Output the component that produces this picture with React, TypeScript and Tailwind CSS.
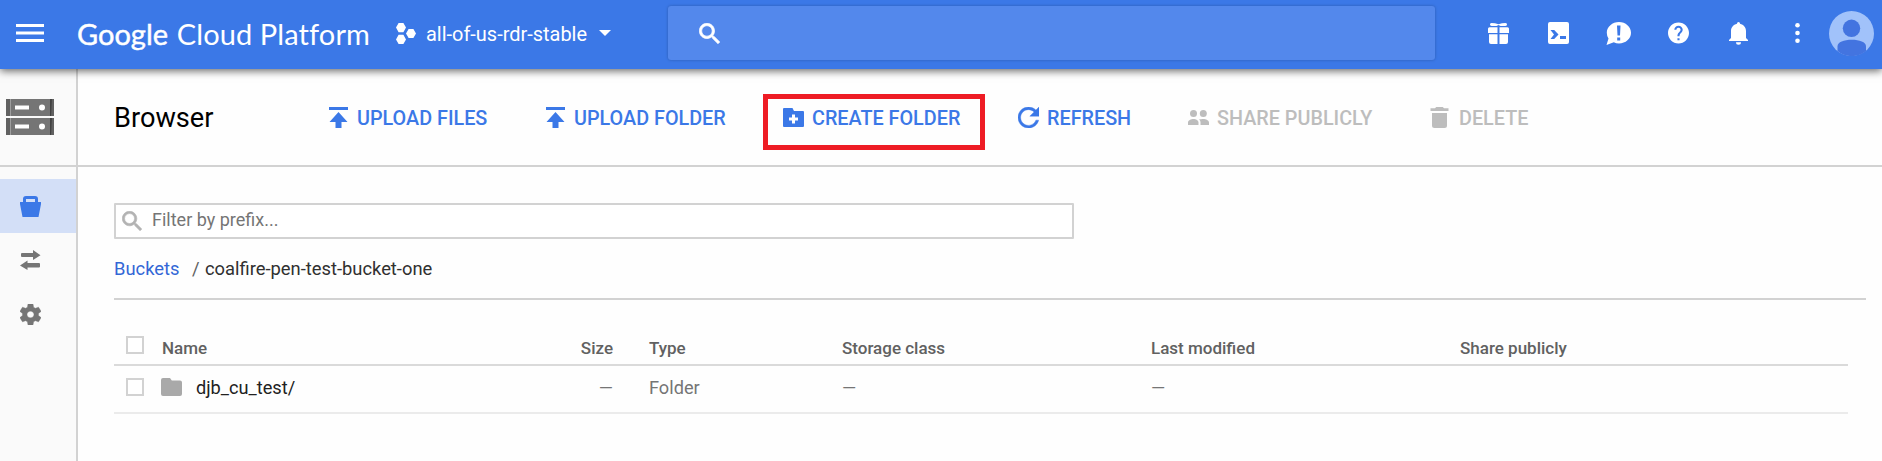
import React from 'react';

type IconProps = { className?: string };

const UploadIcon = () => (
  <svg className="h-[21px] w-[19px] shrink-0" viewBox="0 0 19 21" fill="currentColor">
    <path d="M0 0h19v3H0zM9.5 5l9 10h-6v6h-6v-6h-6z" />
  </svg>
);

const CreateFolderIcon = () => (
  <svg className="h-[19px] w-[21px] shrink-0" viewBox="0 0 21 19" fill="currentColor" fillRule="evenodd">
    <path d="M1 0h8.500l1.500 3h9a1 1 0 0 1 1 1v14a1 1 0 0 1-1 1H1a1 1 0 0 1-1-1V1a1 1 0 0 1 1-1zM9 6.500v3H6v3h3v3h3v-3h3v-3h-3v-3z" />
  </svg>
);

const RefreshIcon = () => (
  <svg className="h-[21px] w-[21px] shrink-0" viewBox="4 4 16 16" fill="currentColor" stroke="currentColor" strokeWidth="0.3">
    <path d="M17.650 6.350C16.200 4.900 14.210 4 12 4c-4.420 0-7.990 3.580-7.990 8s3.570 8 7.990 8c3.730 0 6.840-2.550 7.730-6h-2.080c-.820 2.330-3.040 4-5.650 4-3.310 0-6-2.690-6-6s2.690-6 6-6c1.660 0 3.140.690 4.220 1.780L13 11h7V4l-2.350 2.350z" />
  </svg>
);

const PeopleIcon = () => (
  <svg className="h-[15px] w-[21px] shrink-0" viewBox="0 0 21 15" fill="currentColor">
    <circle cx="5.500" cy="3.500" r="3.500" />
    <circle cx="15.300" cy="3.500" r="3.500" />
    <path d="M0 15v-2.500C0 10.200 3 9 5.500 9s5 1.200 5 3.500V15zM12.500 15v-2.500c0-1.300-.6-2.200-1.500-2.900 1.100-.4 3-.6 4.300-.6 2.700 0 5.700 1.200 5.700 3.500V15z" />
  </svg>
);

const TrashIcon = () => (
  <svg className="h-[21px] w-[19px] shrink-0" viewBox="0 0 19 21" fill="currentColor">
    <path d="M0.500 1.200H5L6.200 0h6.600L14 1.200h4.500V4H.5zM2 6h15v12.500a2.500 2.500 0 0 1-2.500 2.500h-10A2.500 2.500 0 0 1 2 18.500z" />
  </svg>
);

const SearchIcon = ({ className }: IconProps) => (
  <svg className={className} viewBox="2.700 2.700 18 18" fill="currentColor" stroke="currentColor" strokeWidth="0.600">
    <path d="M15.500 14h-.790l-.280-.270C15.410 12.590 16 11.110 16 9.500 16 5.910 13.090 3 9.500 3S3 5.910 3 9.500 5.910 16 9.500 16c1.610 0 3.090-.590 4.230-1.570l.270.280v.790l5 4.990L20.490 19l-4.990-5zm-6 0C7.010 14 5 11.990 5 9.500S7.010 5 9.500 5 14 7.010 14 9.500 11.990 14 9.500 14z" />
  </svg>
);

const ProjectIcon = () => (
  <svg className="ml-[26px] h-[21px] w-5" viewBox="0 0 20 21" fill="currentColor">
    <path d="M2.600 0h4.800L10 4.600 7.400 9.200H2.600L0 4.600zM2.600 11.800h4.800L10 16.400 7.400 21H2.600L0 16.400zM12.600 6h4.800L20 10.500 17.400 15h-4.800L10 10.500z" />
  </svg>
);

const ServerIcon = () => (
  <svg className="h-9 w-12" viewBox="0 0 48 36">
    {[0, 19].map((y) => (
      <g key={y} transform={`translate(0 ${y})`}>
        <path fill="#757575" d="M0 0h48v17H0z" />
        <path fill="#616161" d="M0 0h4v17H0zM45 0h3v17h-3z" />
        <path fill="#9e9e9e" d="M4 0h1v17H4z" />
        <path fill="#424242" d="M44 0h2l-1 17h-1z" />
        <path fill="#fff" d="M9 6.500h14v4H9z" />
        <circle cx="36" cy="8.500" r="3" fill="#fff" />
      </g>
    ))}
  </svg>
);

const BucketIcon = () => (
  <svg className="h-[21px] w-[21px]" viewBox="0 0 21 21" fill="currentColor" fillRule="evenodd">
    <path d="M3 6V3a3 3 0 0 1 3-3h9a3 3 0 0 1 3 3v3h3v2l-2.500 13h-16L0 8V6zM6 3v3h9V3z" />
  </svg>
);

const TransferIcon = () => (
  <svg className="h-[21px] w-[21px]" viewBox="0 0 21 21" fill="currentColor">
    <path d="M1 4Q1 3 2 3h11V0l7.500 5.200L13 10V7H2Q1 7 1 6zM20 14q0-1-1-1H7.500v-2.500L0 15.500 7.500 20v-2.500H19q1 0 1-1z" />
  </svg>
);

const GearIcon = () => (
  <svg className="h-[21px] w-[21px]" viewBox="2.270 2 19.460 20" preserveAspectRatio="none" fill="currentColor" stroke="currentColor" strokeWidth="0.300">
    <path d="M19.430 12.980c.040-.320.070-.640.070-.980s-.030-.660-.070-.980l2.110-1.650c.190-.150.240-.420.120-.640l-2-3.460c-.120-.220-.390-.300-.610-.220l-2.490 1c-.520-.400-1.080-.730-1.690-.980l-.380-2.650C14.460 2.180 14.250 2 14 2h-4c-.250 0-.460.180-.490.420l-.380 2.650c-.610.250-1.170.590-1.690.980l-2.490-1c-.230-.090-.490 0-.610.220l-2 3.460c-.130.220-.070.490.120.640l2.110 1.650c-.040.320-.070.650-.070.980s.030.660.070.980l-2.110 1.650c-.190.150-.240.420-.120.640l2 3.460c.120.220.390.300.610.220l2.490-1c.520.400 1.080.730 1.690.980l.380 2.650c.030.240.240.420.490.420h4c.250 0 .460-.180.490-.420l.380-2.650c.610-.250 1.170-.590 1.690-.980l2.490 1c.230.090.490 0 .610-.220l2-3.460c.120-.220.070-.490-.120-.640l-2.110-1.650zM12 15.200c-1.800 0-3.200-1.400-3.200-3.200s1.400-3.200 3.200-3.200 3.200 1.400 3.200 3.200-1.400 3.200-3.200 3.200z" />
  </svg>
);

const FolderIcon = () => (
  <svg className="-mt-[2px] h-[18px] w-[21px]" viewBox="0 0 21 18" fill="#a9a9a9">
    <path d="M2 0h7l1.800 2.500H19a2 2 0 0 1 2 2V16a2 2 0 0 1-2 2H2a2 2 0 0 1-2-2V2a2 2 0 0 1 2-2z" />
  </svg>
);

const GiftIcon = () => (
  <svg className="h-[21px] w-[21px]" viewBox="0 0 21 21" fill="currentColor">
    <path d="M3.500 0Q7 0 10.500 1.300 14 0 17.500 0 19.300 0 19 1.700 18.700 3 17 3h-4.500L10.500 2 8.500 3H4Q2.300 3 2 1.700 1.700 0 3.500 0zM1.500 4.200h8V10H0V5.700a1.500 1.500 0 0 1 1.500-1.500zM11.500 4.200h8A1.500 1.500 0 0 1 21 5.700V10h-9.500zM1 11.200h8.500V21H3a2 2 0 0 1-2-2zM11.500 11.200H20V19a2 2 0 0 1-2 2h-6.500z" />
  </svg>
);

const ShellIcon = () => (
  <svg className="h-[22px] w-[21px]" viewBox="0 0 21 22" fill="currentColor" fillRule="evenodd">
    <path d="M2 0h17a2 2 0 0 1 2 2v18a2 2 0 0 1-2 2H2a2 2 0 0 1-2-2V2a2 2 0 0 1 2-2zM2.500 8l3.500 4.500L2.500 17h3.700L10.500 12.500 6.200 8zM12 14v3h6v-3z" />
  </svg>
);

const FeedbackIcon = () => (
  <svg className="h-[23px] w-[25px]" viewBox="0 0 25 23" fill="currentColor" fillRule="evenodd">
    <path d="M13 0c6.600 0 12 4.800 12 10.800s-5.400 10.700-12 10.700c-1.900 0-3.600-.4-5.200-1.200L.5 23l2-6.600A9.900 9.900 0 0 1 .8 10.800C.8 4.800 6.400 0 13 0zM11 3.500l.5 10h2.500l.5-10zM11.200 15.500v3h3v-3z" />
  </svg>
);

const HelpIcon = () => (
  <svg className="h-[22px] w-[21px]" viewBox="2 2 20 20" fill="currentColor">
    <path d="M12 2C6.480 2 2 6.480 2 12s4.480 10 10 10 10-4.480 10-10S17.520 2 12 2zm1 17h-2v-2h2v2zm2.070-7.750l-.900.920C13.450 12.900 13 13.500 13 15h-2v-.500c0-1.100.450-2.100 1.170-2.830l1.240-1.260c.370-.360.590-.860.590-1.410 0-1.100-.900-2-2-2s-2 .900-2 2H8c0-2.210 1.790-4 4-4s4 1.790 4 4c0 .880-.360 1.680-.930 2.250z" />
  </svg>
);

const BellIcon = () => (
  <svg className="h-[23px] w-[19px]" viewBox="0 0 19 23" fill="currentColor">
    <path d="M8 1.500a1.500 1.500 0 0 1 3 0v.2C14.800 2.500 17 5.500 17 9v7l2 2v1H0v-1l2-2V9c0-3.500 2.200-6.500 6-7.300zM7 20.300h5a2.500 2.500 0 0 1-5 0z" />
  </svg>
);

const MoreIcon = () => (
  <svg className="h-5 w-[5px]" viewBox="0 0 5 20" fill="currentColor">
    <circle cx="2.500" cy="2.300" r="2.300" />
    <circle cx="2.500" cy="10" r="2.300" />
    <circle cx="2.500" cy="17.700" r="2.300" />
  </svg>
);

const Avatar = () => (
  <svg className="h-[45px] w-[45px]" viewBox="0 0 45 45">
    <circle cx="22.500" cy="22.500" r="22.500" fill="#a1c2fa" />
    <circle cx="22.500" cy="17.300" r="8.700" fill="#4374e0" />
    <path fill="#4374e0" d="M8.500 40v-4.500C8.500 31 15 28.800 22.700 28.800S37 31 37 35.500V40a22.500 22.500 0 0 1-28.500 0z" />
  </svg>
);

const Action = ({ icon, label, className }: { icon: React.ReactNode; label: string; className: string }) => (
  <button className={`flex items-center whitespace-nowrap text-[19.800px] leading-6 font-medium ${className}`}>
    {icon}
    <span className="pt-[3px]">{label}</span>
  </button>
);

const Checkbox = ({ className }: IconProps) => (
  <span className={`block h-[18px] w-[18px] border-2 border-[#d2d2d2] bg-white ${className}`} />
);

const grid = 'grid grid-cols-[48px_450px_37px_193px_309px_309px_388px] items-start';

export default function App() {
  return (
    <div className="flex h-[461px] w-[1882px] flex-col overflow-hidden bg-[#fefefe] font-['Roboto',sans-serif] text-black">
      <header className="relative z-10 flex h-[69px] shrink-0 items-center bg-[#3b78e7] pb-[3px] text-white shadow-[0_2px_8px_rgba(0,0,0,0.6)]">
        <svg className="ml-4 h-[18px] w-7" viewBox="0 0 28 18" fill="currentColor">
          <path d="M0 0h28v3H0zM0 7.500h28v3H0zM0 15h28v3H0z" />
        </svg>
        <div className="ml-[33px] flex w-[293px] items-baseline whitespace-nowrap pt-px font-['Lato',sans-serif] text-[29px] leading-8 [font-variant-ligatures:none]">
          <span className="w-[101px] [-webkit-text-stroke:0.45px_white]">Google</span>
          <span className="tracking-[0.100px]">Cloud Platform</span>
        </div>
        <ProjectIcon />
        <span className="ml-[10px] w-[164px] whitespace-nowrap pt-[2px] text-[19.950px] leading-6">all-of-us-rdr-stable</span>
        <svg className="ml-[9px] h-[6px] w-3" viewBox="0 0 12 6" fill="currentColor">
          <path d="M0 0h12L6 6z" />
        </svg>
        <div className="ml-[57px] flex h-[54px] w-[767px] items-center rounded-[3px] bg-[#5388ec] pl-[31px] shadow-[0_0_3px_rgba(0,0,0,0.25)]">
          <SearchIcon className="h-[21px] w-[21px]" />
        </div>
        <div className="ml-[53px] flex items-center">
          <GiftIcon />
          <span className="ml-[39px]"><ShellIcon /></span>
          <span className="ml-[37px]"><FeedbackIcon /></span>
          <span className="ml-[37px]"><HelpIcon /></span>
          <span className="ml-10"><BellIcon /></span>
          <span className="ml-[47px]"><MoreIcon /></span>
          <span className="ml-[29px]"><Avatar /></span>
        </div>
      </header>

      <div className="flex h-[98px] shrink-0 border-b-2 border-[#d2d2d2]">
        <div className="flex w-[78px] items-start border-r-2 border-[#d2d2d2] bg-[#fafafa] pt-[30px] pl-[6px]">
          <ServerIcon />
        </div>
        <div className="flex h-24 items-center pl-9">
          <h1 className="w-[215px] pt-px text-[27.200px] leading-8">Browser</h1>
          <Action className="w-[217px] gap-[9px] text-[#3b78e7]" icon={<UploadIcon />} label="UPLOAD FILES" />
          <Action className="w-[217px] gap-[9px] text-[#3b78e7]" icon={<UploadIcon />} label="UPLOAD FOLDER" />
          <div className="mt-[10px] flex h-14 w-[222px] items-start border-5 border-[#ee1c24] pt-[5px] pl-[15px]">
            <Action className="gap-2 text-[#3b78e7]" icon={<CreateFolderIcon />} label="CREATE FOLDER" />
          </div>
          <Action className="ml-[33px] w-[170px] gap-2 text-[#3b78e7]" icon={<RefreshIcon />} label="REFRESH" />
          <Action className="w-[242px] gap-2 text-[#bdbdbd]" icon={<PeopleIcon />} label="SHARE PUBLICLY" />
          <Action className="gap-[10px] text-[#bdbdbd]" icon={<TrashIcon />} label="DELETE" />
        </div>
      </div>

      <div className="flex grow">
        <nav className="w-[78px] shrink-0 border-r-2 border-[#d2d2d2] bg-[#fafafa] pt-3 text-[#757575]">
          <div className="flex h-[54px] items-center bg-[#d3dff7] pl-5 text-[#3b78e7]"><BucketIcon /></div>
          <div className="flex h-[54px] items-center pl-5"><TransferIcon /></div>
          <div className="flex h-[54px] items-center pl-5"><GearIcon /></div>
        </nav>
        <main className="w-[1788px] pt-9 pl-9">
          <div className="flex h-9 w-[960px] items-center rounded-[1px] border-2 border-[#d2d2d2] bg-white pl-[6px]">
            <SearchIcon className="h-5 w-5 text-[#b3b3b3]" />
            <span className="ml-[10px] pb-[3px] text-[18px] leading-6 text-[#757575]">Filter by prefix...</span>
          </div>
          <div className="flex h-[59px] items-start pt-[18px] text-[18.350px] leading-6">
            <a className="w-[78px] text-[#3367d6]">Buckets</a>
            <span className="w-[13px] text-[#616161]">/</span>
            <span className="whitespace-nowrap text-[#303030]">coalfire-pen-test-bucket-one</span>
          </div>
          <div className="h-[2px] bg-[#d2d2d2]" />
          <div className="w-[1734px]">
            <div className={`${grid} h-[66px] border-b-2 border-[#dadada] pt-9 text-[17px] leading-6 font-medium text-[#616161]`}>
              <Checkbox className="ml-3" />
              <span>Name</span>
              <span className="-ml-20 w-[81px] text-right">Size</span>
              <span>Type</span>
              <span>Storage class</span>
              <span>Last modified</span>
              <span>Share publicly</span>
            </div>
            <div className={`${grid} h-12 border-b-2 border-[#ebebeb] pt-[10px] text-[18.200px] leading-6 text-[#757575]`}>
              <Checkbox className="mt-[2px] ml-3" />
              <span className="-ml-px flex items-center gap-[14px] text-[#212121]">
                <FolderIcon />
                djb_cu_test/
              </span>
              <span className="-ml-20 w-[81px] text-right">—</span>
              <span>Folder</span>
              <span>—</span>
              <span>—</span>
            </div>
          </div>
        </main>
      </div>
    </div>
  );
}
